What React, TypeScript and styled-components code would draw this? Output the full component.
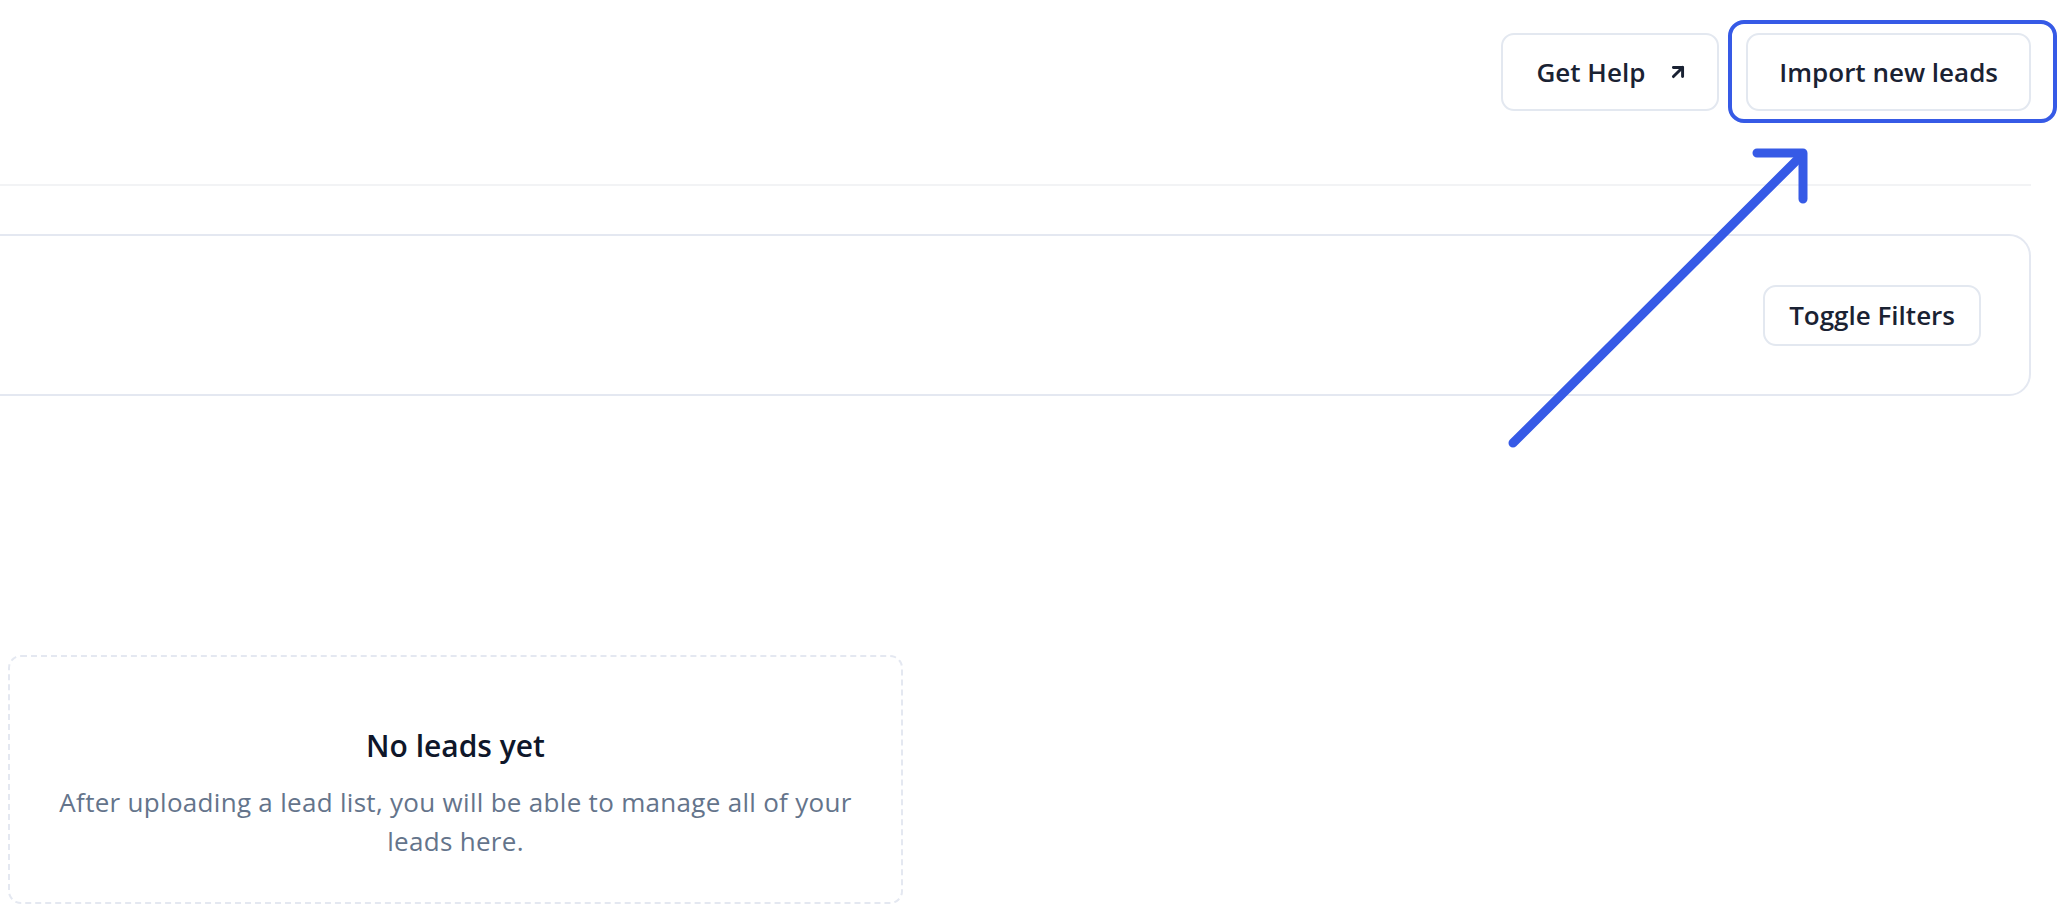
import React from "react";
import styled, { createGlobalStyle } from "styled-components";
import { ArrowUpRight } from "lucide-react";

const GlobalStyle = createGlobalStyle`
  html, body {
    margin: 0;
    padding: 0;
    background: #ffffff;
  }
  body {
    font-family: "Open Sans", "Noto Sans", sans-serif;
    color: #111827;
  }
`;

const Page = styled.div`
  position: relative;
  width: 100vw;
  min-height: 918px;
  overflow: hidden;
  background: #ffffff;
`;

const Content = styled.main`
  display: flex;
  flex-direction: column;
  padding: 0 33px 0 8px;
`;

const Header = styled.header`
  display: flex;
  justify-content: flex-end;
  align-items: center;
  gap: 27px;
  padding: 33px 0 73px;
`;

const Button = styled.button<{ $padL?: number; $padR?: number; $height?: number }>`
  display: inline-flex;
  align-items: center;
  gap: 22px;
  height: ${(p) => p.$height ?? 78}px;
  padding: 0 ${(p) => p.$padR ?? 31}px 0 ${(p) => p.$padL ?? 31}px;
  background: #ffffff;
  border: 2px solid #e3e8f0;
  border-radius: 13px;
  font-family: "Open Sans", "Noto Sans", sans-serif;
  font-size: 26px;
  font-weight: 600;
  color: #1a2233;
  cursor: pointer;
  white-space: nowrap;
`;

const Highlighted = styled.div`
  position: relative;
  display: flex;
`;

const HighlightRing = styled.span`
  position: absolute;
  top: -13px;
  bottom: -12px;
  left: -18px;
  right: -26px;
  border: 4px solid #365ae6;
  border-radius: 16px;
  pointer-events: none;
`;

const Divider = styled.hr`
  margin: 0 0 0 -40px;
  border: none;
  height: 2px;
  background: #f2f3f5;
`;

const FilterCard = styled.section`
  display: flex;
  justify-content: flex-end;
  align-items: center;
  margin: 48px 0 0 -40px;
  height: 162px;
  padding: 0 48px;
  box-sizing: border-box;
  border: 2px solid #e4e8f1;
  border-radius: 22px;
`;

const EmptyCard = styled.section`
  display: flex;
  flex-direction: column;
  align-items: center;
  width: 895px;
  height: 249px;
  box-sizing: border-box;
  margin-top: 259px;
  padding-top: 70px;
  border: 2px dashed #e4e8f1;
  border-radius: 13px;
  text-align: center;
`;

const EmptyTitle = styled.h2`
  margin: 0;
  font-size: 30px;
  line-height: 38px;
  font-weight: 600;
  color: #0f172a;
`;

const EmptyText = styled.p`
  margin: 18px 0 0;
  width: 830px;
  font-size: 26px;
  letter-spacing: 0.3px;
  line-height: 39px;
  color: #64748b;
`;

const Annotation = styled.svg`
  position: absolute;
  left: 0;
  top: 0;
  width: 2064px;
  height: 918px;
  pointer-events: none;
`;

export default function App() {
  return (
    <Page>
      <GlobalStyle />
      <Content>
        <Header>
          <Button $padL={33} $padR={28}>
            Get Help
            <ArrowUpRight size={22} strokeWidth={3.2} />
          </Button>
          <Highlighted>
            <Button>Import new leads</Button>
            <HighlightRing />
          </Highlighted>
        </Header>
        <Divider />
        <FilterCard>
          <Button $padL={24} $padR={24} $height={61}>
            Toggle Filters
          </Button>
        </FilterCard>
        <EmptyCard>
          <EmptyTitle>No leads yet</EmptyTitle>
          <EmptyText>
            After uploading a lead list, you will be able to manage all of your
            leads here.
          </EmptyText>
        </EmptyCard>
      </Content>
      <Annotation viewBox="0 0 2064 918">
        <g
          fill="none"
          stroke="#365ae6"
          strokeWidth={9}
          strokeLinecap="round"
          strokeLinejoin="round"
        >
          <line x1={1513} y1={443} x2={1800} y2={157} />
          <polyline points="1757,153 1803,153 1803,199" />
        </g>
      </Annotation>
    </Page>
  );
}
